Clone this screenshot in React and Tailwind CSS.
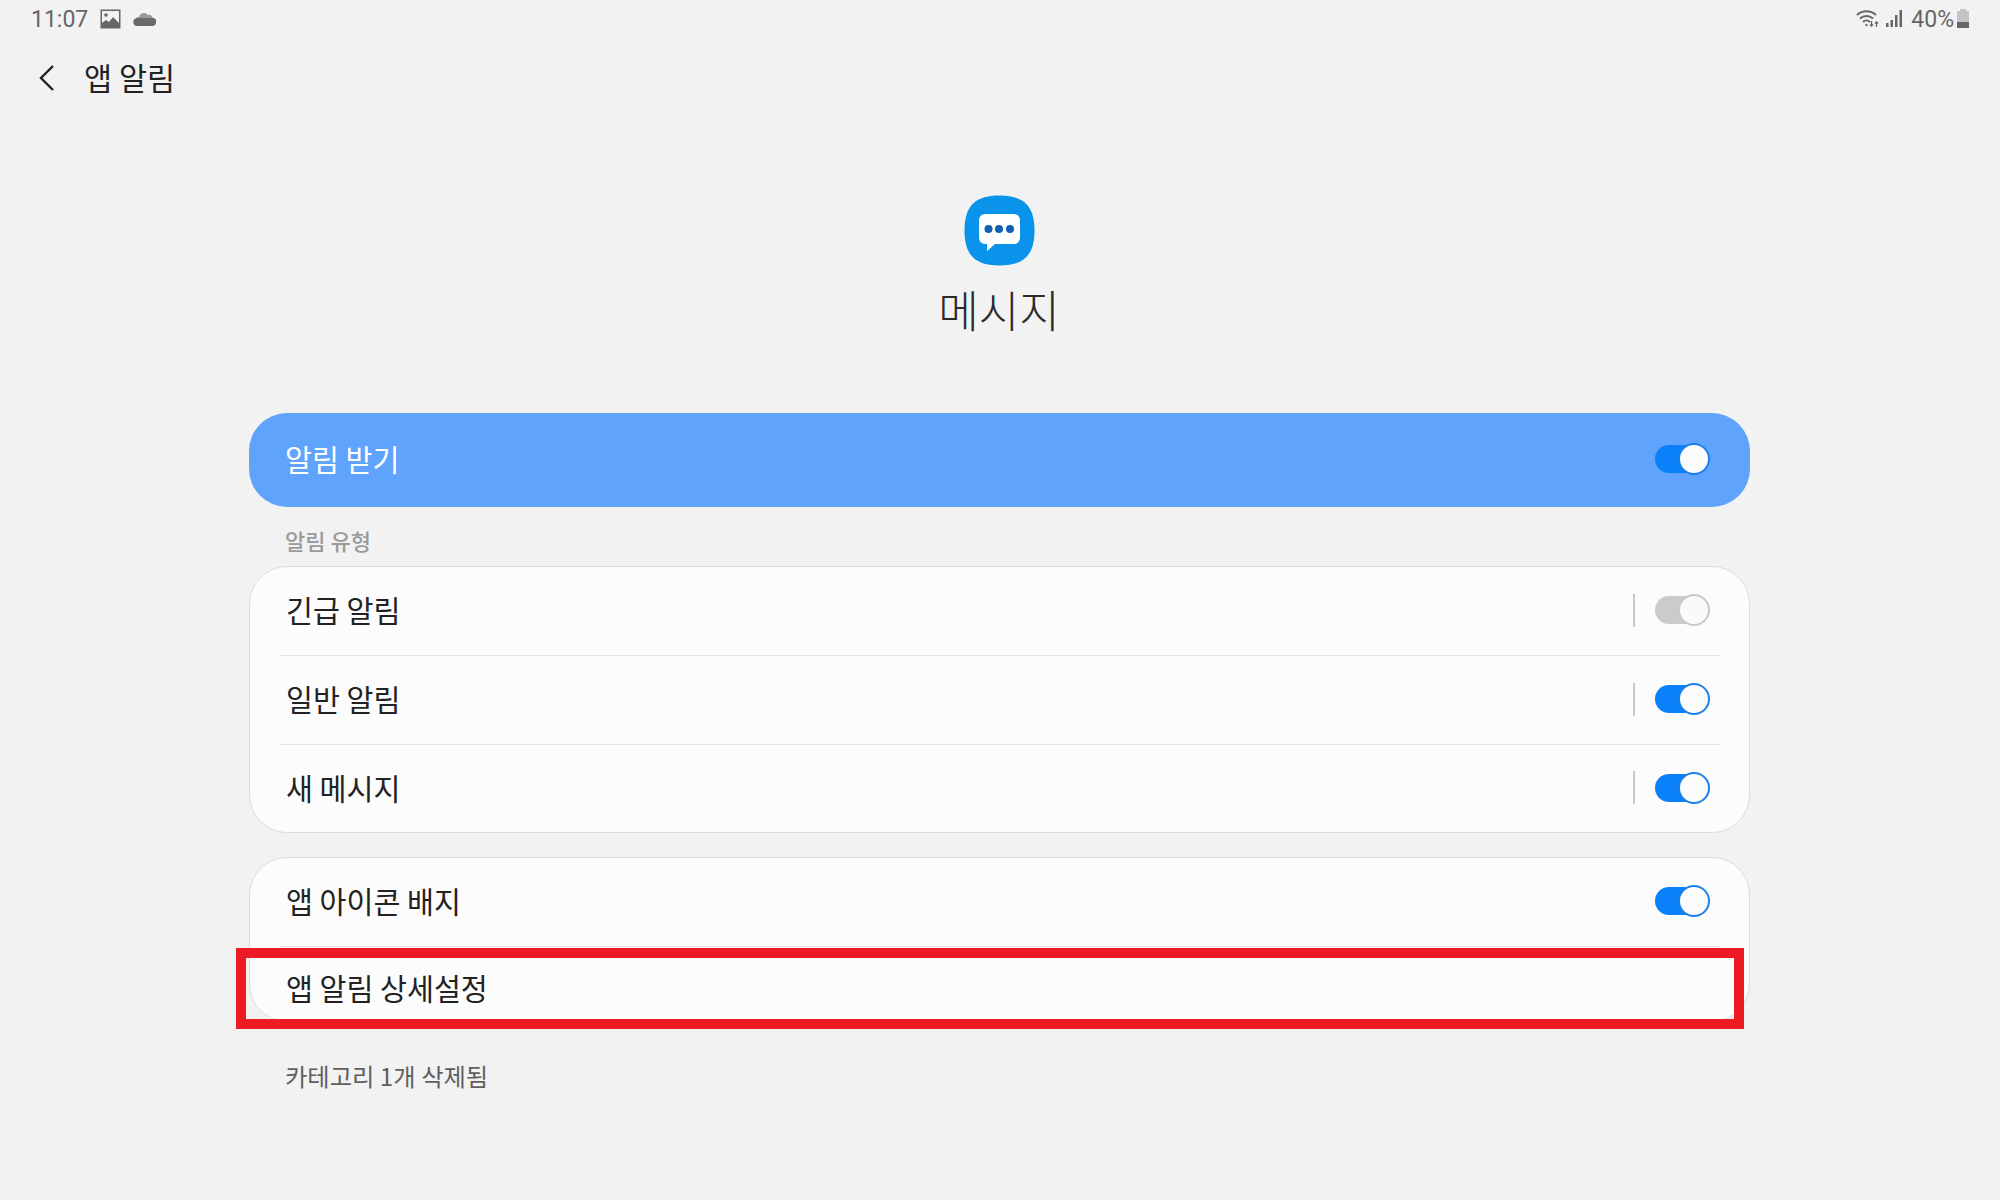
const KR = "font-['Noto_Sans_CJK_KR',sans-serif]";

function Toggle({ disabled }) {
  return (
    <div className="relative w-[55px] h-8 mb-0.5 flex items-center shrink-0">
      <div className={`w-[54px] h-7 rounded-full ${disabled ? 'bg-[#cbcbcb]' : 'bg-[#0a81fa]'}`} />
      <div className={`absolute right-0 top-0 w-8 h-8 rounded-full border-2 ${disabled ? 'bg-[#fafafa] border-[#c9c9c9]' : 'bg-[#fcfcfc] border-[#1a80e6]'}`} />
    </div>
  );
}

function Row({ label, split, disabled, toggle = true, className = 'h-[88px]' }) {
  return (
    <div className={`flex items-center justify-between pl-9 pr-[39px] ${className}`}>
      <span className="text-[29.3px] leading-none text-[#222] mb-0.5">{label}</span>
      {toggle && (
        <div className="flex items-center">
          {split && <div className="w-0.5 h-[33px] bg-[#c8c8c8] mr-5 mb-0.5" />}
          <Toggle disabled={disabled} />
        </div>
      )}
    </div>
  );
}

function Divider() {
  return <div className="h-px mx-[29px] bg-[#e3e3e3]" />;
}

function StatusLeft() {
  return (
    <div className="flex items-center">
      <span className="text-[23px] leading-none text-[#666] font-['Roboto',sans-serif] ml-[31px] mt-0.5">11:07</span>
      <svg className="ml-3" width="21" height="20" viewBox="0 0 21 20">
        <rect x="0.5" y="0.5" width="20" height="19" fill="#666" />
        <rect x="2" y="2" width="17" height="16" fill="#f2f2f2" />
        <circle cx="6" cy="6" r="1.8" fill="#666" />
        <path d="M2 18v-4l4-3 3 2 4-5 6 6v4z" fill="#666" />
      </svg>
      <svg className="ml-3" width="23" height="15" viewBox="0 0 23 15">
        <path d="M6 7a5 5 0 0 1 9-3 4 4 0 0 1 5 4H6z" fill="#999" />
        <path d="M4 15a4 4 0 0 1-1-7.800 3 3 0 0 1 4-0.200h13a3 3 0 0 1 3 4 4 4 0 0 1-3 4z" fill="#6a6a6a" />
      </svg>
    </div>
  );
}

function StatusRight() {
  return (
    <div className="flex items-center mr-[31px]">
      <svg width="24" height="19" viewBox="0 0 24 19" fill="none" stroke="#666" strokeWidth="2">
        <path d="M1 6a14 14 0 0 1 19 0" />
        <path d="M4 9.500a9.500 9.500 0 0 1 13 0" />
        <path d="M7 13a5 5 0 0 1 7 0" />
        <circle cx="10.500" cy="16" r="1.200" fill="#666" stroke="none" />
        <path d="M15.500 12v5M14 15.500l1.500 1.500 1.500-1.500M20.500 18v-5M19 14.500l1.500-1.500 1.500 1.500" strokeWidth="1.300" />
      </svg>
      <svg className="ml-[6px]" width="17" height="19" viewBox="0 0 17 19" fill="#666">
        <rect x="0" y="14" width="2.500" height="4" />
        <rect x="4.500" y="11" width="2.500" height="7" />
        <rect x="9" y="6" width="2.500" height="12" />
        <rect x="13.500" y="1" width="2.500" height="17" />
      </svg>
      <span className="ml-2 text-[23px] leading-none text-[#666] font-['Roboto',sans-serif] mt-0.5">40%</span>
      <svg className="ml-[3px]" width="12" height="19" viewBox="0 0 12 19">
        <rect x="3" y="0" width="6" height="2" fill="#c4c4c4" />
        <rect x="0" y="2" width="12" height="11" fill="#c4c4c4" />
        <rect x="0" y="13" width="12" height="6" fill="#666" />
      </svg>
    </div>
  );
}

function MessageIcon() {
  return (
    <svg width="71" height="71" viewBox="0 0 71 71">
      <path d="M35.500 0.500C60 0.500 70.500 11 70.500 35.500S60 70.500 35.500 70.500 0.500 60 0.500 35.500 11 0.500 35.500 0.500z" fill="#0a93ea" />
      <path d="M21 19h29a6 6 0 0 1 6 6v18a6 6 0 0 1-6 6H31l-8 7v-7h-2a6 6 0 0 1-6-6V25a6 6 0 0 1 6-6z" fill="#fff" />
      <circle cx="24.500" cy="34" r="4" fill="#0f5fb4" />
      <circle cx="35" cy="34" r="4" fill="#0f5fb4" />
      <circle cx="46" cy="34" r="4" fill="#0f5fb4" />
    </svg>
  );
}

export default function App() {
  return (
    <div className={`w-full h-screen overflow-hidden bg-[#f2f2f2] ${KR}`}>
      <div className="h-[37px] flex items-center justify-between">
        <StatusLeft />
        <StatusRight />
      </div>

      <div className="h-[81px] flex items-center">
        <svg className="ml-[38px]" width="18" height="28" viewBox="0 0 18 28" fill="none" stroke="#222" strokeWidth="2.400">
          <path d="M15 2 3 14l12 12" />
        </svg>
        <span className="ml-[28px] text-[30.5px] leading-none text-[#222]">앱 알림</span>
      </div>

      <div className="flex flex-col items-center mt-[77px] mr-[2px]">
        <MessageIcon />
        <div className="mt-[17px] text-[44px] leading-[52px] text-[#2a2a2a] font-light">메시지</div>
      </div>

      <div className="ml-[249px] mr-[250px] mt-[78px]">
        <div className="h-[94px] rounded-[38px] bg-[#60a3fc] flex items-center justify-between pl-9 pr-10">
          <span className="text-[29.3px] leading-none text-white mb-0.5">알림 받기</span>
          <Toggle />
        </div>

        <div className="h-[59px] pl-9 pt-[20px] text-[22px] leading-[26px] font-medium text-[#9a9a9a]">알림 유형</div>

        <div className="rounded-[38px] border border-[#dcdcdc] bg-[#fcfcfc] overflow-hidden">
          <Row label="긴급 알림" split disabled />
          <Divider />
          <Row label="일반 알림" split />
          <Divider />
          <Row label="새 메시지" split className="h-[87px]" />
        </div>

        <div className="relative mt-6 h-[165px] rounded-[38px] border border-[#dcdcdc] bg-[#fcfcfc]">
          <Row label="앱 아이콘 배지" />
          <Divider />
          <Row label="앱 알림 상세설정" toggle={false} className="h-[75px] pt-2" />
          <div className="absolute left-[-14px] right-[5px] top-[90px] h-[81px] border-[10px] border-[#ed1c24]" />
        </div>

        <div className="mt-[40px] pl-9 text-[24.3px] leading-[28px] text-[#5f5f5f]">카테고리 1개 삭제됨</div>
      </div>
    </div>
  );
}
